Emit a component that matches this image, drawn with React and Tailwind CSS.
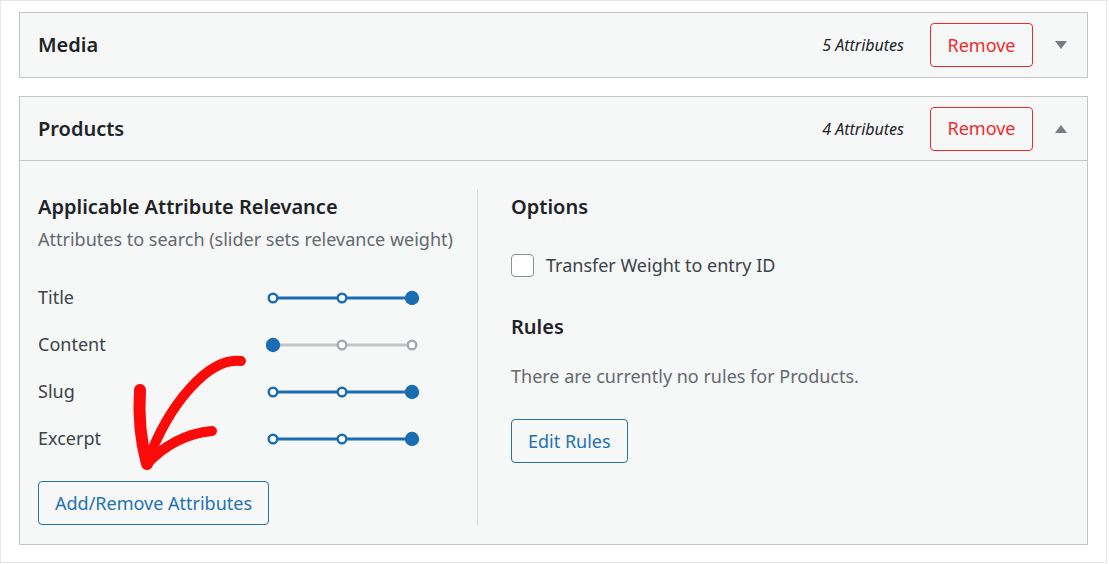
const ROWS = [
  { label: "Title", value: 2 },
  { label: "Content", value: 0 },
  { label: "Slug", value: 2 },
  { label: "Excerpt", value: 2 },
];

function Slider({ value }) {
  const xs = [7, 76, 146];
  const active = value > 0;
  const track = active ? "#1a6db3" : "#c3c4c7";
  return (
    <svg width="154" height="18" viewBox="0 0 154 18">
      <line x1="7" y1="9" x2="146" y2="9" stroke={track} strokeWidth="3" />
      {xs.map((x, i) =>
        i === value ? (
          <circle key={i} cx={x} cy="9" r="7.2" fill="#1a6db3" />
        ) : (
          <circle key={i} cx={x} cy="9" r="4.3" fill="#fff" stroke={active ? "#1a6db3" : "#a7aaad"} strokeWidth="2.4" />
        )
      )}
    </svg>
  );
}

function Header({ title, count, open }) {
  return (
    <div className={`flex items-center h-[64px] pl-[18px] pr-[20px] ${open ? "border-b border-[#c3c4c7]" : ""}`}>
      <h2 className="text-[20px] font-semibold text-[#1d2327] flex-1">{title}</h2>
      <span className="text-[16px] italic text-[#1d2327] mr-[26px]">{count} Attributes</span>
      <button className="h-[44px] w-[103px] border border-[#ee2a2f] rounded-[4px] text-[18px] text-[#ee2a2f] bg-[#f6f7f7]">
        Remove
      </button>
      <svg width="12" height="8" viewBox="0 0 12 8" className="ml-[22px]">
        {open ? <path d="M0 8 L6 0 L12 8 Z" fill="#787c82" /> : <path d="M0 0 L12 0 L6 8 Z" fill="#787c82" />}
      </svg>
    </div>
  );
}

export default function App() {
  return (
    <div className="w-[1107px] h-[563px] bg-white border border-[#e6e6e6] pt-[11px] pl-[18px] relative" style={{ fontFamily: "'Noto Sans', sans-serif" }}>
      <div className="w-[1069px] bg-[#f6f7f7] border border-[#c3c4c7]">
        <Header title="Media" count={5} />
      </div>

      <div className="w-[1069px] mt-[18px] bg-[#f6f7f7] border border-[#c3c4c7]">
        <Header title="Products" count={4} open />
        <div className="flex pt-[28px] pb-[19px] px-[18px]">
          {/* attributes */}
          <div className="w-[440px] border-r border-[#dcdcde] pt-[4px] flex flex-col">
            <h3 className="text-[20px] leading-[28px] font-semibold text-[#1d2327]">Applicable Attribute Relevance</h3>
            <p className="mt-[5px] text-[18px] leading-[26px] text-[#646970]">Attributes to search (slider sets relevance weight)</p>
            <div className="mt-[22px]">
              {ROWS.map(r => (
                <div key={r.label} className="flex items-center h-[47px]">
                  <span className="w-[228px] text-[18px] text-[#3c434a]">{r.label}</span>
                  <Slider value={r.value} />
                </div>
              ))}
            </div>
            <button className="mt-[19px] self-start h-[44px] px-[16px] border border-[#2271b1] rounded-[4px] text-[18px] text-[#2271b1] bg-[#f6f7f7]">
              Add/Remove Attributes
            </button>
          </div>

          {/* options */}
          <div className="pl-[33px] pt-[4px] flex flex-col items-start">
            <h3 className="text-[20px] leading-[28px] font-semibold text-[#1d2327]">Options</h3>
            <label className="mt-[31px] flex items-center gap-[12px]">
              <span className="w-[23px] h-[23px] rounded-[4px] border border-[#8c8f94] bg-white" />
              <span className="text-[18px] text-[#3c434a]">Transfer Weight to entry ID</span>
            </label>
            <h3 className="mt-[34px] text-[20px] leading-[28px] font-semibold text-[#1d2327]">Rules</h3>
            <p className="mt-[22px] text-[18px] leading-[26px] text-[#646970]">There are currently no rules for Products.</p>
            <button className="mt-[30px] h-[44px] px-[16px] border border-[#2271b1] rounded-[4px] text-[18px] text-[#2271b1] bg-[#f6f7f7]">
              Edit Rules
            </button>
          </div>
        </div>
      </div>

      {/* hand-drawn annotation arrow */}
      <svg className="absolute left-0 top-0 pointer-events-none" width="1107" height="563">
        <g fill="none" stroke="#fb0a0a" strokeLinecap="round" strokeLinejoin="round">
          <path d="M240 360 C208 356 168 402 146 462" strokeWidth="10" />
          <path d="M139 389 C137 420 141 445 146 463" strokeWidth="12" />
          <path d="M211 430 C186 432 162 445 146 463" strokeWidth="10" />
        </g>
      </svg>
    </div>
  );
}
